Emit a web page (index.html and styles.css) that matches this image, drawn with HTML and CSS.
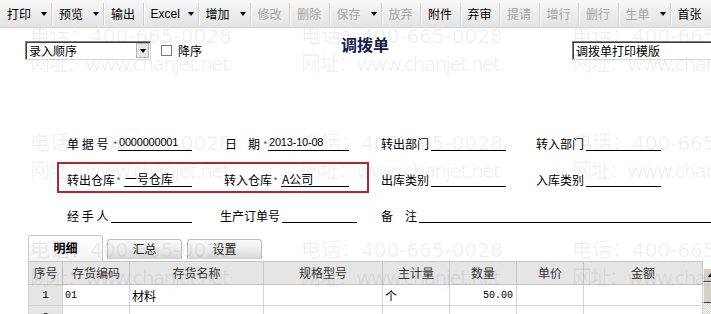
FILE: index.html
```html
<!DOCTYPE html>
<html>
<head>
<meta charset="utf-8">
<link rel="stylesheet" href="styles.css">
</head>
<body>
<div class="toolbar">
	<span class="tb drop">打印<i class="arr"></i></span>
	<span class="tb drop">预览<i class="arr"></i></span>
	<span class="tb">输出</span>
	<span class="tb drop excel">Excel<i class="arr"></i></span>
	<span class="tb drop">增加<i class="arr"></i></span>
	<span class="tb off">修改</span>
	<span class="tb off">删除</span>
	<span class="tb drop off">保存<i class="arr"></i></span>
	<span class="tb off">放弃</span>
	<span class="tb">附件</span>
	<span class="tb">弃审</span>
	<span class="tb off">提请</span>
	<span class="tb off">增行</span>
	<span class="tb off">删行</span>
	<span class="tb drop off">生单<i class="arr"></i></span>
	<span class="tb">首张</span>
</div>

<div class="sheet">
	<div class="headrow">
		<div class="combo order"><span class="combo-text">录入顺序</span><b class="combo-btn"><i></i></b></div>
		<div class="chk"><i class="box"></i>降序</div>
		<h1 class="title">调拨单</h1>
		<div class="combo tpl"><span class="combo-text">调拨单打印模版</span></div>
	</div>

	<div class="form">
		<div class="field">
			<span class="lbl w41">单 据 号</span><span class="req w10">*</span><span class="val num w74">0000000001</span>
		</div>
		<div class="field shift1">
			<span class="lbl w35">日 期</span><span class="req w8">*</span><span class="val num w81">2013-10-08</span>
		</div>
		<div class="field">
			<span class="lbl w48">转出部门</span><span class="val gap2 w75"></span>
		</div>
		<div class="field">
			<span class="lbl w48">转入部门</span><span class="val gap2 w75"></span>
		</div>

		<div class="field">
			<span class="lbl w47">转出仓库</span><span class="req w10 mid">*</span><span class="val w68">一号仓库</span>
		</div>
		<div class="field">
			<span class="lbl w47">转入仓库</span><span class="req w10 mid">*</span><span class="val w68">A公司</span>
		</div>
		<div class="field">
			<span class="lbl w48">出库类别</span><span class="val gap2 w75"></span>
		</div>
		<div class="field">
			<span class="lbl w48">入库类别</span><span class="val gap2 w75"></span>
		</div>

		<div class="field">
			<span class="lbl w41">经 手 人</span><span class="val gap3 w81"></span>
		</div>
		<div class="field shiftback">
			<span class="lbl w60">生产订单号</span><span class="val gap2 w75"></span>
		</div>
		<div class="field wide">
			<span class="lbl w36">备 注</span><span class="val gap2 grow"></span>
		</div>
	</div>

	<div class="tabs">
		<span class="tab active">明细</span>
		<span class="tab">汇总</span>
		<span class="tab second">设置</span>
	</div>

	<div class="grid">
		<table>
			<colgroup>
				<col class="c-no"><col class="c-code"><col class="c-name"><col class="c-spec">
				<col class="c-unit"><col class="c-qty"><col class="c-price"><col class="c-sum">
			</colgroup>
			<tr>
				<th>序号</th><th>存货编码</th><th>存货名称</th><th>规格型号</th>
				<th>主计量</th><th>数量</th><th>单价</th><th>金额</th>
			</tr>
			<tr>
				<td class="no">1</td><td class="num">01</td><td>材料</td><td></td>
				<td>个</td><td class="num right">50.00</td><td></td><td></td>
			</tr>
			<tr>
				<td class="no">2</td><td></td><td></td><td></td>
				<td></td><td></td><td></td><td></td>
			</tr>
		</table>
		<div class="vscroll">
			<b class="sb-btn"><i></i></b>
			<b class="sb-thumb"></b>
			<span class="sb-track"></span>
		</div>
	</div>
</div>

<div class="watermark">
	<div class="wm"><p>电话：400-665-0028</p><p class="url">网址：www.chanjet.net</p></div>
	<div class="wm"><p>电话：400-665-0028</p><p class="url">网址：www.chanjet.net</p></div>
	<div class="wm"><p>电话：400-665-0028</p><p class="url">网址：www.chanjet.net</p></div>
	<div class="wm"><p>电话：400-665-0028</p><p class="url">网址：www.chanjet.net</p></div>
	<div class="wm"><p>电话：400-665-0028</p><p class="url">网址：www.chanjet.net</p></div>
	<div class="wm"><p>电话：400-665-0028</p><p class="url">网址：www.chanjet.net</p></div>
	<div class="wm"><p>电话：400-665-0028</p><p class="url">网址：www.chanjet.net</p></div>
	<div class="wm"><p>电话：400-665-0028</p><p class="url">网址：www.chanjet.net</p></div>
	<div class="wm"><p>电话：400-665-0028</p><p class="url">网址：www.chanjet.net</p></div>
</div>

<div class="mark"></div>
</body>
</html>
```

FILE: styles.css
```css
* {
	box-sizing: border-box;
}

body {
	margin: 0;
	width: 711px;
	height: 314px;
	overflow: hidden;
	position: relative;
	background-color: #FFFFFF;
	color: #000000;
	font-family: "Noto Sans CJK SC", sans-serif;
	font-size: 12px;
}

/* toolbar */
.toolbar {
	position: relative;
	z-index: 2;
	height: 28px;
	display: flex;
	align-items: center;
	white-space: nowrap;
	background: linear-gradient(#f8f8f8, #ececec 55%, #e3e3e3);
	border-bottom: 1px solid #d4d4d4;
}

.tb {
	flex: none;
	display: flex;
	align-items: center;
	width: 39.5px;
	height: 22px;
	padding-left: 7px;
	border-right: 1px solid #d0d0d0;
	box-shadow: 1px 0 0 #fbfbfb;
}

.tb.drop {
	width: 52px;
}

.tb.excel {
	width: 55px;
	font-family: "Liberation Sans", sans-serif;
}

.tb.off {
	color: #a4a4a4;
}

.tb:last-child {
	border-right: none;
	box-shadow: none;
}

.arr {
	margin-left: auto;
	margin-right: 4px;
	width: 0;
	height: 0;
	border-left: 3.5px solid transparent;
	border-right: 3.5px solid transparent;
	border-top: 4px solid #000000;
}

/* header with combos and title */
.headrow {
	display: flex;
	align-items: flex-start;
	height: 32px;
	padding: 13px 0 0 25px;
	white-space: nowrap;
}

.combo {
	flex: none;
	display: flex;
	height: 19px;
	border: 1px solid #808080;
	border-right-color: #d8d8d8;
	border-bottom-color: #d8d8d8;
	box-shadow: inset 1px 1px 0 #404040;
	background-color: #FFFFFF;
}

.combo-text {
	flex: 1;
	padding-left: 3px;
	line-height: 17px;
}

.order {
	width: 126px;
}

.combo-btn {
	width: 13px;
	height: 15px;
	margin: 1px 1px 0 0;
	display: flex;
	align-items: center;
	justify-content: center;
	background-color: #e6e6e6;
	border: 1px solid #b8b8b8;
}

.combo-btn i {
	width: 0;
	height: 0;
	border-left: 3.5px solid transparent;
	border-right: 3.5px solid transparent;
	border-top: 4px solid #000000;
}

.chk {
	flex: none;
	display: flex;
	align-items: center;
	height: 19px;
	margin-left: 10px;
}

.box {
	width: 11px;
	height: 11px;
	margin-right: 6px;
	border: 1px solid #7a7a7a;
	background-color: #FFFFFF;
}

.title {
	flex: none;
	margin: -7px 0 0 139px;
	font-size: 16px;
	line-height: 20px;
	font-weight: bold;
	color: #12204a;
}

.tpl {
	width: 160px;
	margin-left: 183px;
}

/* form fields */
.form {
	display: grid;
	grid-template-columns: 157px 157px 155px 1fr;
	grid-auto-rows: 16px;
	row-gap: 20px;
	margin-top: 75px;
	padding-left: 67px;
}

.field {
	display: flex;
	align-items: flex-end;
	white-space: nowrap;
}

.field.wide {
	grid-column: 3 / 5;
}

.shift1 {
	margin-left: 1px;
}

.shiftback {
	margin-left: -4px;
}

.lbl {
	line-height: 15px;
	text-align: justify;
	text-align-last: justify;
}

.req {
	height: 16px;
	padding: 5px 1px 0 0;
	font-family: "Liberation Sans", sans-serif;
	font-size: 9px;
	line-height: 9px;
	color: #444444;
	text-align: right;
}

.req.mid {
	text-align: center;
}

.val {
	height: 16px;
	line-height: 15px;
	padding-left: 1px;
	border-bottom: 1px solid #000000;
}

.val.num {
	font-family: "Liberation Sans", sans-serif;
	font-size: 11px;
	letter-spacing: -0.2px;
}

.gap2 { margin-left: 2px; }
.gap3 { margin-left: 3px; }
.grow { flex: 1; }

.w8 { width: 8px; }
.w10 { width: 10px; }
.w35 { width: 35px; }
.w36 { width: 36px; }
.w41 { width: 41px; }
.w47 { width: 47px; }
.w48 { width: 48px; }
.w60 { width: 60px; }
.w68 { width: 68px; }
.w74 { width: 74px; }
.w75 { width: 75px; }
.w81 { width: 81px; }

/* tabs */
.tabs {
	display: flex;
	align-items: flex-end;
	height: 26px;
	margin-top: 12px;
	padding-left: 28px;
}

.tab {
	width: 75px;
	height: 20px;
	margin: 0 0 2px 4px;
	line-height: 18px;
	text-align: center;
	color: #222222;
	background: linear-gradient(#fbfbfb, #e9e9e9 60%, #d9d9d9);
	border: 1px solid #bdbdbd;
	border-bottom-color: #cfcfcf;
	border-radius: 3px 3px 0 0;
}

.tab.second {
	margin-left: 5px;
}

.tab.active {
	height: 26px;
	margin: 0;
	line-height: 24px;
	font-weight: bold;
	color: #000000;
	background: linear-gradient(#ffffff, #f3f3f3);
	border-color: #c8c8c8;
	border-bottom: none;
}

/* detail grid */
.grid {
	display: flex;
	margin-left: 28px;
}

table {
	flex: none;
	width: 674px;
	table-layout: fixed;
	border-collapse: collapse;
}

.c-no { width: 34px; }
.c-code { width: 67px; }
.c-name { width: 134px; }
.c-spec { width: 119px; }
.c-unit { width: 67px; }
.c-qty { width: 67px; }
.c-price { width: 67px; }
.c-sum { width: 119px; }

th {
	height: 22px;
	padding: 0;
	font-weight: normal;
	color: #333333;
	background-color: #e5e5e5;
	border: 1px solid #c6c6c6;
	white-space: nowrap;
}

td {
	height: 21px;
	padding: 0 0 0 2px;
	border: 1px solid #d4d4d4;
	white-space: nowrap;
}

td.no {
	padding: 0;
	text-align: center;
	background-color: #e5e5e5;
	font-family: "Liberation Mono", monospace;
	font-size: 11px;
}

td.num {
	font-family: "Liberation Mono", monospace;
	font-size: 10px;
}

td.right {
	text-align: right;
	padding-right: 3px;
}

.vscroll {
	flex: none;
	display: flex;
	flex-direction: column;
	width: 16px;
	height: 60px;
	margin-top: 7px;
}

.sb-btn,
.sb-thumb {
	display: flex;
	justify-content: center;
	background-color: #d4d0c8;
	border: 1px solid;
	border-color: #f4f4f4 #404040 #404040 #f4f4f4;
}

.sb-btn {
	height: 14px;
	padding-top: 4px;
}

.sb-btn i {
	width: 0;
	height: 0;
	border-left: 3.5px solid transparent;
	border-right: 3.5px solid transparent;
	border-bottom: 4px solid #000000;
}

.sb-thumb {
	height: 21px;
}

.sb-track {
	flex: 1;
	background: repeating-conic-gradient(#d4d0c8 0 25%, #ffffff 0 50%) 0 0 / 2px 2px;
}

/* watermark over the sheet */
.watermark {
	position: absolute;
	z-index: 1;
	top: 22px;
	left: 0;
	width: 711px;
	height: 292px;
	overflow: hidden;
	display: grid;
	grid-template-columns: repeat(3, 271px);
	grid-auto-rows: 107px;
	padding-left: 30px;
	pointer-events: none;
}

.wm {
	font-family: "DejaVu Sans", "Noto Sans CJK SC", sans-serif;
	font-size: 20px;
	line-height: 28px;
	color: rgba(0, 0, 0, 0.065);
	white-space: nowrap;
}

.wm p {
	margin: 0;
}

.wm .url {
	letter-spacing: -1.6px;
}

/* red highlight around the warehouse fields */
.mark {
	position: absolute;
	z-index: 3;
	left: 57px;
	top: 162px;
	width: 312px;
	height: 31px;
	border: 2px solid #b3262b;
}
```
